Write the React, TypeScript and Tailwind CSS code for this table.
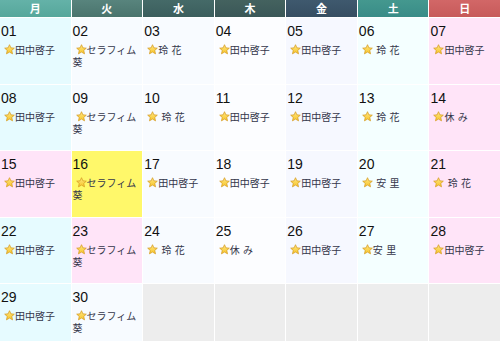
const heads = [
  { label: "月", cls: "bg-gradient-to-b from-[#64b2a8] to-[#56a79b]" },
  { label: "火", cls: "bg-gradient-to-b from-[#58847d] to-[#4a746d]" },
  { label: "水", cls: "bg-gradient-to-b from-[#456a68] to-[#3b5e5d]" },
  { label: "木", cls: "bg-gradient-to-b from-[#44625f] to-[#3a5757]" },
  { label: "金", cls: "bg-gradient-to-b from-[#3f596e] to-[#364e62]" },
  { label: "土", cls: "bg-gradient-to-b from-[#44988f] to-[#398c87]" },
  { label: "日", cls: "bg-gradient-to-b from-[#d26767] to-[#c75a5a]" },
];

const colBg = [
  "bg-[#e6fbff]",
  "bg-[#f7fbff]",
  "bg-[#f8fbff]",
  "bg-[#fcfdff]",
  "bg-[#f6f8ff]",
  "bg-[#f4ffff]",
  "bg-[#ffe4f8]",
];

const T = "田中啓子";
const S = "セラフィム葵";
const R = "玲\u2004花";
const RS = "\u2004玲\u2004花";
const Y = "休\u2004み";
const A = "安\u2004里";
const AS = "\u2004安\u2004里";

const days: { d: string; name: string; bg?: string }[] = [
  { d: "01", name: T },
  { d: "02", name: S },
  { d: "03", name: R },
  { d: "04", name: T },
  { d: "05", name: T },
  { d: "06", name: RS },
  { d: "07", name: T },
  { d: "08", name: T },
  { d: "09", name: S },
  { d: "10", name: RS },
  { d: "11", name: T },
  { d: "12", name: T },
  { d: "13", name: RS },
  { d: "14", name: Y },
  { d: "15", name: T, bg: "bg-[#ffe4f8]" },
  { d: "16", name: S, bg: "bg-[#fff86a]" },
  { d: "17", name: T },
  { d: "18", name: T },
  { d: "19", name: T },
  { d: "20", name: AS },
  { d: "21", name: RS },
  { d: "22", name: T },
  { d: "23", name: S, bg: "bg-[#ffe4f8]" },
  { d: "24", name: RS },
  { d: "25", name: Y },
  { d: "26", name: T },
  { d: "27", name: A },
  { d: "28", name: T },
  { d: "29", name: T },
  { d: "30", name: S },
];

function Star() {
  return (
    <svg
      width="11"
      height="11"
      viewBox="0 0 24 24"
      className="inline-block align-[-1px] ml-[3px]"
    >
      <defs>
        <linearGradient id="sg" x1="0" y1="0" x2="0" y2="1">
          <stop offset="0" stopColor="#ffe680" />
          <stop offset="1" stopColor="#f7c52a" />
        </linearGradient>
      </defs>
      <polygon
        points="12,1.5 15.1,8.4 22.5,9.1 16.9,14 18.6,21.5 12,17.6 5.4,21.5 7.1,14 1.5,9.1 8.9,8.4"
        fill="url(#sg)"
        stroke="#d49a1e"
        strokeWidth="1.6"
        strokeLinejoin="round"
      />
    </svg>
  );
}

export default function App() {
  return (
    <div className="w-[500px] h-[341px] overflow-hidden bg-white">
      <div className="grid grid-cols-7 gap-px bg-white">
        {heads.map((h) => (
          <div
            key={h.label}
            className={`${h.cls} h-[17px] flex items-center justify-center text-white text-[11px] font-bold font-['Noto_Sans_CJK_JP',sans-serif]`}
          >
            {h.label}
          </div>
        ))}
        {days.map((day, i) => (
          <div
            key={day.d}
            className={`${day.bg ?? colBg[i % 7]} h-[65.5px] pt-[5px] pl-[1px]`}
          >
            <div className="text-[14px] leading-[16px] text-[#111] font-['Liberation_Sans',Arial,sans-serif]">
              {day.d}
            </div>
            <div className="mt-[5px] text-[10px] leading-[12px] text-[#34364a] font-['Noto_Sans_CJK_JP',sans-serif]">
              <Star />
              {day.name}
            </div>
          </div>
        ))}
        {[0, 1, 2, 3, 4].map((k) => (
          <div key={k} className="bg-[#ededed] h-[65.5px]" />
        ))}
      </div>
    </div>
  );
}
